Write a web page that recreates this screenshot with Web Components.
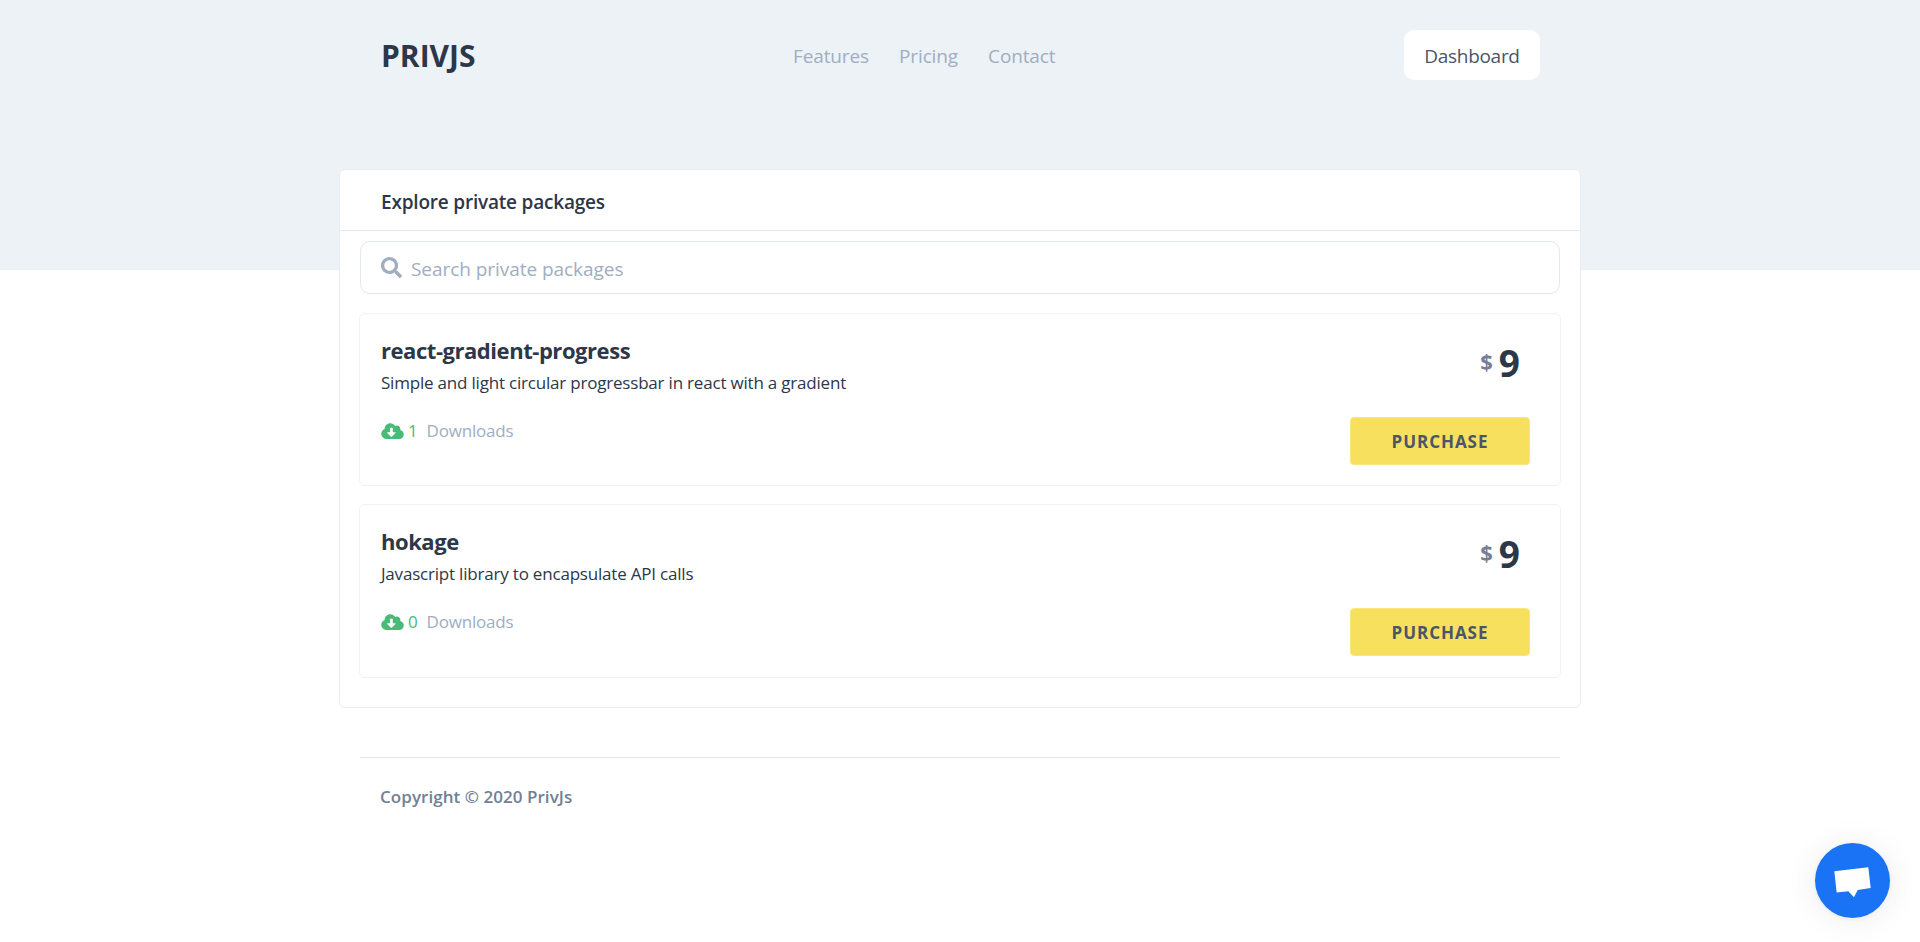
<!DOCTYPE html>
<html lang="en">
<head>
<meta charset="utf-8">
<title>PrivJs</title>
<style>
  body {
    margin: 0;
    background: #fff;
    color: #2d3748;
    font-family: "Open Sans", "Liberation Sans", sans-serif;
  }
</style>
</head>
<body>
<priv-header>
  <nav-link slot="nav">Features</nav-link>
  <nav-link slot="nav">Pricing</nav-link>
  <nav-link slot="nav">Contact</nav-link>
</priv-header>
<package-panel heading="Explore private packages">
  <package-item name="react-gradient-progress" description="Simple and light circular progressbar in react with a gradient" downloads="1" price="9"></package-item>
  <package-item name="hokage" description="Javascript library to encapsulate API calls" downloads="0" price="9"></package-item>
</package-panel>
<priv-footer>Copyright © 2020 PrivJs</priv-footer>
<chat-launcher></chat-launcher>

<script>
class PrivHeader extends HTMLElement {
  constructor() {
    super()
    const root = this.attachShadow({mode: 'open'})
    root.innerHTML = `
      <style>
        :host {
          display: block;
          height: 270px;
          background: #edf2f7;
        }
        .row {
          width: 1160px;
          height: 50px;
          margin: 0 auto;
          padding-top: 30px;
          display: flex;
        }
        .logo {
          width: 413px;
          padding-left: 1px;
          box-sizing: border-box;
          font-size: 30px;
          font-weight: 700;
          line-height: 52px;
          color: #2d3748;
        }
        nav {
          display: flex;
          gap: 30px;
        }
        .dashboard {
          margin-left: auto;
          height: 50px;
          width: 136px;
          background: #fff;
          border-radius: 10px;
          color: #4a5568;
          font-size: 19px;
          line-height: 52px;
          letter-spacing: -0.3px;
          text-align: center;
        }
      </style>
      <div class="row">
        <div class="logo">PRIVJS</div>
        <nav><slot name="nav"></slot></nav>
        <div class="dashboard">Dashboard</div>
      </div>
    `
  }
}

class NavLink extends HTMLElement {
  constructor() {
    super()
    const root = this.attachShadow({mode: 'open'})
    root.innerHTML = `
      <style>
        :host {
          display: block;
          color: #a0aec0;
          font-size: 19px;
          letter-spacing: -0.12px;
          line-height: 52px;
        }
      </style>
      <slot></slot>
    `
  }
}

class PackagePanel extends HTMLElement {
  constructor() {
    super()
    const root = this.attachShadow({mode: 'open'})
    root.innerHTML = `
      <style>
        :host {
          display: block;
          box-sizing: border-box;
          width: 1242px;
          margin: -101px auto 0;
          background: #fff;
          border: 1px solid #e9edf2;
          border-radius: 6px;
        }
        .title {
          height: 61px;
          padding-left: 41px;
          border-bottom: 1px solid #e2e8f0;
          box-sizing: border-box;
          font-size: 19px;
          font-weight: 600;
          line-height: 64px;
          letter-spacing: -0.2px;
          color: #2d3748;
        }
        .search {
          box-sizing: border-box;
          height: 53px;
          margin: 10px 20px 19px;
          padding-left: 20px;
          display: flex;
          align-items: center;
          gap: 9px;
          border: 1px solid #e2e8f0;
          border-radius: 10px;
          color: #a0aec0;
          font-size: 19px;
          letter-spacing: -0.05px;
        }
        .search svg { width: 21px; height: 21px; fill: currentColor; }
        .search span { padding-top: 2px; }
        .list {
          display: flex;
          flex-direction: column;
          gap: 18px;
          padding: 0 19px 29.2px;
        }
      </style>
      <div class="title">${this.getAttribute("heading")}</div>
      <div class="search">
        <svg viewBox="0 0 512 512"><path d="M505 442.7L405.3 343c-4.5-4.5-10.6-7-17-7H372c27.6-35.3 44-79.7 44-128C416 93.1 322.9 0 208 0S0 93.1 0 208s93.1 208 208 208c48.3 0 92.7-16.4 128-44v16.3c0 6.4 2.5 12.5 7 17l99.7 99.7c9.4 9.4 24.6 9.4 33.9 0l28.3-28.3c9.4-9.4 9.4-24.6.1-34zM208 336c-70.7 0-128-57.2-128-128 0-70.7 57.2-128 128-128 70.7 0 128 57.2 128 128 0 70.7-57.2 128-128 128z"/></svg>
        <span>Search private packages</span>
      </div>
      <div class="list"><slot></slot></div>
    `
  }
}

class PackageItem extends HTMLElement {
  constructor() {
    super()
    const root = this.attachShadow({mode: 'open'})
    root.innerHTML = `
      <style>
        :host {
          display: flex;
          justify-content: space-between;
          box-sizing: border-box;
          height: 173.4px;
          padding: 21px 30px 0 21px;
          border: 1px solid #f0f3f6;
          border-radius: 6px;
        }
        .name {
          font-size: 22px;
          font-weight: 700;
          line-height: 30px;
          letter-spacing: -0.45px;
          color: #2d3748;
        }
        .desc {
          margin-top: 5px;
          font-size: 17px;
          line-height: 26px;
          letter-spacing: -0.2px;
          color: #2d3748;
        }
        .stats {
          margin-top: 22px;
          display: flex;
          align-items: center;
          font-size: 17px;
          line-height: 26px;
          letter-spacing: -0.2px;
          color: #a0aec0;
        }
        .stats svg { width: 23px; height: 18px; fill: #48bb78; margin-right: 4px; }
        .count { color: #48bb78; margin-right: 9px; }
        .side {
          display: flex;
          flex-direction: column;
          align-items: flex-end;
        }
        .price {
          display: flex;
          align-items: center;
          gap: 6px;
          margin-top: 2px;
          padding-right: 10px;
          height: 50px;
        }
        .currency { font-size: 22px; font-weight: 700; color: #718096; margin-top: -2px; }
        .amount { font-size: 37px; font-weight: 700; color: #2d3748; }
        .buy {
          box-sizing: border-box;
          width: 180px;
          height: 48px;
          margin-top: 30px;
          background: #f6e05e;
          border: 1px solid #f9e680;
          border-radius: 4px;
          color: #4a5568;
          font-size: 17px;
          font-weight: 700;
          letter-spacing: 0.95px;
          line-height: 48px;
          text-align: center;
        }
      </style>
      <div>
        <div class="name">${this.getAttribute("name")}</div>
        <div class="desc">${this.getAttribute("description")}</div>
        <div class="stats">
          <svg viewBox="0 0 640 512"><path d="M537.6 226.6c4.1-10.7 6.4-22.4 6.4-34.6 0-53-43-96-96-96-19.7 0-38.1 6-53.3 16.2C367 64.2 315.3 32 256 32c-88.4 0-160 71.6-160 160 0 2.7.1 5.4.2 8.1C40.2 219.8 0 273.2 0 336c0 79.5 64.5 144 144 144h368c70.7 0 128-57.3 128-128 0-61.9-44-113.6-102.4-125.4zm-132.9 88.7L299.3 420.7c-6.2 6.2-16.4 6.2-22.6 0L171.3 315.3c-10.1-10.1-2.9-27.3 11.3-27.3H248V176c0-8.8 7.2-16 16-16h48c8.8 0 16 7.2 16 16v112h65.4c14.2 0 21.4 17.2 11.3 27.3z"/></svg>
          <span class="count">${this.getAttribute("downloads")}</span>
          <span>Downloads</span>
        </div>
      </div>
      <div class="side">
        <div class="price"><span class="currency">$</span><span class="amount">${this.getAttribute("price")}</span></div>
        <div class="buy">PURCHASE</div>
      </div>
    `
  }
}

class PrivFooter extends HTMLElement {
  constructor() {
    super()
    const root = this.attachShadow({mode: 'open'})
    root.innerHTML = `
      <style>
        :host {
          display: block;
          box-sizing: border-box;
          width: 1200px;
          margin: 49px auto 0;
          padding: 26px 20px 0;
          border-top: 1px solid #e2e8f0;
          color: #718096;
          font-size: 17px;
          font-weight: 600;
          line-height: 26px;
          letter-spacing: 0.05px;
        }
      </style>
      <slot></slot>
    `
  }
}

class ChatLauncher extends HTMLElement {
  constructor() {
    super()
    const root = this.attachShadow({mode: 'open'})
    root.innerHTML = `
      <style>
        :host {
          position: fixed;
          left: 1815px;
          top: 843px;
          width: 75px;
          height: 75px;
          border-radius: 50%;
          background: #1a73f5;
          box-shadow: 0 1px 6px rgba(0, 0, 0, .06), 0 2px 32px rgba(0, 0, 0, .08);
        }
        svg { display: block; width: 75px; height: 75px; }
      </style>
      <svg viewBox="0 0 75 75"><polygon fill="#fff" points="19.3,28.3 53.3,24.3 55.7,45 42.7,47 39,54.3 33.3,48.3 21.7,49.6"/></svg>
    `
  }
}

customElements.define("priv-header", PrivHeader)
customElements.define("nav-link", NavLink)
customElements.define("package-panel", PackagePanel)
customElements.define("package-item", PackageItem)
customElements.define("priv-footer", PrivFooter)
customElements.define("chat-launcher", ChatLauncher)
</script>
</body>
</html>
